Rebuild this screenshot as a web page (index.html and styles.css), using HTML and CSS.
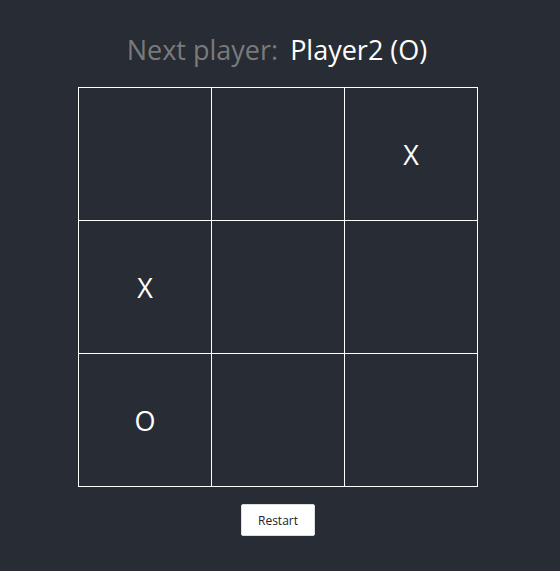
FILE: index.html
```html
<!DOCTYPE html>
<html>
<head>
<meta charset="utf-8">
<link rel="stylesheet" href="styles.css">
</head>
<body>
<div class="app">
  <div class="status"><span class="label">Next player:</span><span class="player">Player2 (O)</span></div>
  <div class="board">
    <div class="cell"></div>
    <div class="cell"></div>
    <div class="cell">X</div>
    <div class="cell">X</div>
    <div class="cell"></div>
    <div class="cell"></div>
    <div class="cell">O</div>
    <div class="cell"></div>
    <div class="cell"></div>
  </div>
  <button class="restart">Restart</button>
</div>
</body>
</html>
```
FILE: styles.css
```css
html, body {
  margin: 0;
  padding: 0;
  background: #282c34;
  height: 100%;
}
.app {
  display: flex;
  flex-direction: column;
  align-items: center;
  font-family: "Open Sans", "Noto Sans", sans-serif;
  color: #ffffff;
  padding-top: 29px;
}
.status {
  font-size: 27px;
  line-height: 42px;
  height: 42px;
  margin-bottom: 16px;
  display: flex;
  gap: 12px;
  margin-left: -6px;
}
.label {
  color: #7a7a7a;
}
.player {
  color: #ffffff;
}
.board {
  display: grid;
  grid-template-columns: repeat(3, 132px);
  grid-template-rows: repeat(3, 132px);
  gap: 1px;
  background: #ffffff;
  border: 1px solid #ffffff;
  margin-left: -4px;
}
.cell {
  background: #282c34;
  display: flex;
  align-items: center;
  justify-content: center;
  font-size: 27px;
  color: #ffffff;
}
.restart {
  margin-top: 17px;
  margin-left: -4px;
  width: 74px;
  height: 32px;
  background: #ffffff;
  color: #222;
  border: 1px solid #ddd;
  border-radius: 2px;
  font-family: "Open Sans", "Noto Sans", sans-serif;
  font-size: 12px;
  padding: 0;
}
```
